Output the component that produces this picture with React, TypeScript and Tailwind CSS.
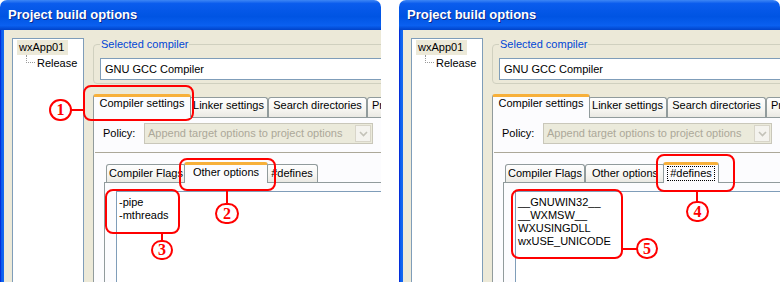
import React from "react"

const Chevron = () => (
  <svg width="9" height="6" viewBox="0 0 9 6">
    <path d="M1 1 L4.5 4.5 L8 1" fill="none" stroke="#c3c2b8" strokeWidth="1.6" />
  </svg>
)

const OuterTab = ({ label, active, w, left }: { label: string; active?: boolean; w: string; left?: boolean }) => {
  if (active) {
    return (
      <div className={`${w} h-[24px] -mx-[2px] -mb-px relative z-10 shrink-0 flex justify-center whitespace-nowrap overflow-hidden leading-[13px] bg-[#fcfcfe] border border-b-0 border-[#919b9c] border-t-[3px] border-t-[#f7b03a] rounded-t-[3px]`}>
        {label}
      </div>
    )
  }
  return (
    <div className={`${w} ${left ? "justify-start pl-[4px]" : "justify-center"} h-[20px] shrink-0 flex whitespace-nowrap overflow-hidden leading-[13px] pt-[1px] border border-b-0 border-[#919b9c] rounded-t-[3px] bg-[linear-gradient(to_bottom,#fefefe,#f6f5f1_60%,#eae9e3)]`}>
      {label}
    </div>
  )
}

const InnerTab = ({ label, active, w, focus }: { label: string; active?: boolean; w: string; focus?: boolean }) => {
  if (active) {
    return (
      <div className={`${w} h-[21px] -mx-[2px] -mb-px relative z-10 shrink-0 flex justify-center whitespace-nowrap overflow-hidden leading-[13px] pt-[1px] bg-[#fcfcfe] border border-b-0 border-[#919b9c] border-t-[3px] border-t-[#f7b03a] rounded-t-[3px]`}>
        {focus ? <span className="border border-dotted border-black px-[2px] h-[15px] leading-[13px]">{label}</span> : label}
      </div>
    )
  }
  return (
    <div className={`${w} h-[18px] shrink-0 flex justify-center whitespace-nowrap overflow-hidden leading-[13px] pt-[2px] border border-b-0 border-[#919b9c] rounded-t-[3px] bg-[linear-gradient(to_bottom,#fefefe,#f6f5f1_60%,#eae9e3)]`}>
      {label}
    </div>
  )
}

const Window = ({ defines }: { defines?: boolean }) => {
  const lines = defines ? ["__GNUWIN32__", "__WXMSW__", "WXUSINGDLL", "wxUSE_UNICODE"] : ["-pipe", "-mthreads"]
  return (
    <div className="w-[381px] h-[282px] shrink-0 overflow-hidden rounded-t-[7px] flex flex-col">
      <div className="w-[470px] h-[30px] shrink-0 flex items-center pl-[8px] pb-[1px] bg-[linear-gradient(to_bottom,#3d86f5_0%,#0a5ced_12%,#0054e3_55%,#0a60f0_85%,#0043c9_100%)]">
        <span className="text-white font-bold text-[13px] [text-shadow:1px_1px_0_#0b2a8c]">Project build options</span>
      </div>

      <div className="w-[470px] flex-1 min-h-0 flex bg-[#ece9d8]">
        <div className="w-[4px] shrink-0 bg-[linear-gradient(to_right,#0019cf,#0a5ff0_40%,#166aee)]" />
        <div className="flex flex-1 min-h-0 pt-[8px] pl-[8px]">
          {/* tree */}
          <div className="w-[72px] shrink-0 bg-white border border-b-0 border-[#7f9db9]">
            <div className="mt-[1px] ml-[4px] h-[15px] leading-[15px] pl-[2px] pr-[4px] bg-[#ece9d8] w-fit">wxApp01</div>
            <div className="flex items-start h-[16px] pl-[13px]">
              <span className="w-[9px] h-[8px] border-l border-b border-dotted border-[#9a9a9a]" />
              <span className="ml-[2px] leading-[16px]">Release</span>
            </div>
          </div>

          <div className="ml-[9px] flex-1 min-w-0 flex flex-col">
            <fieldset className="border border-[#d0d0bf] rounded-[4px] px-[6px] pb-[3px] min-w-0">
              <legend className="px-[1px] leading-[13px] text-[#0046d5]">Selected compiler</legend>
              <div className="mt-[7px] h-[22px] border border-[#7f9db9] bg-white flex items-center pl-[4px]">GNU GCC Compiler</div>
            </fieldset>

            <div className="mt-[10px] h-[23px] flex items-end pl-[2px]">
              <OuterTab label="Compiler settings" active w="w-[98px]" />
              <OuterTab label="Linker settings" w="w-[79px]" />
              <OuterTab label="Search directories" w="w-[99px]" />
              <OuterTab label="Pre/post build steps" left w="w-[112px]" />
            </div>

            <div className="flex-1 min-h-0 flex flex-col border border-b-0 border-[#919b9c] bg-[#fcfcfe]">
              <div className="flex items-center pt-[5px] pl-[9px]">
                <span className="w-[41px] shrink-0">Policy:</span>
                <div className="w-[229px] h-[21px] shrink-0 border border-[#c9c7ba] bg-[#ebeadb] flex items-center">
                  <span className="flex-1 pl-[3px] text-[#aca899] whitespace-nowrap overflow-hidden">Append target options to project options</span>
                  <div className="w-[16px] h-[17px] mr-[1px] border border-[#d8d5c9] bg-[#f4f3ee] flex items-center justify-center">
                    <Chevron />
                  </div>
                </div>
              </div>

              <div className="mt-[8px] ml-[1px] h-px bg-[#aca899]" />

              <div className="mt-[9px] ml-[10px] flex-1 min-h-0 flex flex-col">
                <div className="h-[20px] flex items-end pl-[2px]">
                  <InnerTab label="Compiler Flags" w="w-[80px]" />
                  {defines ? <InnerTab label="Other options" w="w-[80px]" /> : <InnerTab label="Other options" active w="w-[84px]" />}
                  {defines ? <InnerTab label="#defines" active focus w="w-[56px]" /> : <InnerTab label="#defines" w="w-[52px]" />}
                </div>
                <div className="flex-1 min-h-0 flex border border-b-0 border-[#919b9c] bg-[#fcfcfe] pl-[11px] pt-[8px]">
                  <div className="flex-1 border border-b-0 border-[#7f9db9] bg-white pl-[2px] pt-[4px] leading-[13px]">
                    {lines.map((l) => (
                      <div key={l}>{l}</div>
                    ))}
                  </div>
                </div>
              </div>
            </div>
          </div>
        </div>
      </div>
    </div>
  )
}

const Marker = ({ n, pos }: { n: string; pos: string }) => (
  <div className={`absolute ${pos} rounded-full border-2 border-[#ff0000] bg-white flex items-center justify-center font-['Liberation_Serif',serif] font-bold text-[16px] leading-none text-[#ff0000]`}>
    {n}
  </div>
)

export default function App() {
  return (
    <div className="relative w-[780px] h-[282px] overflow-hidden bg-white flex text-[11px] text-black font-['Liberation_Sans',Arial,sans-serif]">
      <Window />
      <div className="ml-[18px]">
        <Window defines />
      </div>

      {/* annotations */}
      <div className="absolute left-[83px] top-[85px] w-[111px] h-[36px] border-2 border-[#ff0000] rounded-[8px]" />
      <div className="absolute left-[179px] top-[158px] w-[97px] h-[33px] border-2 border-[#ff0000] rounded-[8px]" />
      <div className="absolute left-[105px] top-[189px] w-[75px] h-[45px] border-2 border-[#ff0000] rounded-[8px]" />
      <div className="absolute left-[656px] top-[154px] w-[79px] h-[38px] border-2 border-[#ff0000] rounded-[8px]" />
      <div className="absolute left-[511px] top-[189px] w-[112px] h-[70px] border-2 border-[#ff0000] rounded-[8px]" />

      <div className="absolute left-[71px] top-[109px] w-[13px] h-[2px] bg-[#ff0000]" />
      <div className="absolute left-[226px] top-[190px] w-[2px] h-[14px] bg-[#ff0000]" />
      <div className="absolute left-[161px] top-[233px] w-[2px] h-[9px] bg-[#ff0000]" />
      <div className="absolute left-[696px] top-[191px] w-[2px] h-[11px] bg-[#ff0000]" />
      <div className="absolute left-[622px] top-[248px] w-[16px] h-[2px] bg-[#ff0000]" />

      <Marker n="1" pos="left-[49px] top-[99px] w-[23px] h-[22px]" />
      <Marker n="2" pos="left-[215px] top-[203px] w-[24px] h-[21px]" />
      <Marker n="3" pos="left-[151px] top-[240px] w-[22px] h-[20px]" />
      <Marker n="4" pos="left-[686px] top-[201px] w-[23px] h-[21px]" />
      <Marker n="5" pos="left-[636px] top-[238px] w-[22px] h-[21px]" />
    </div>
  )
}
